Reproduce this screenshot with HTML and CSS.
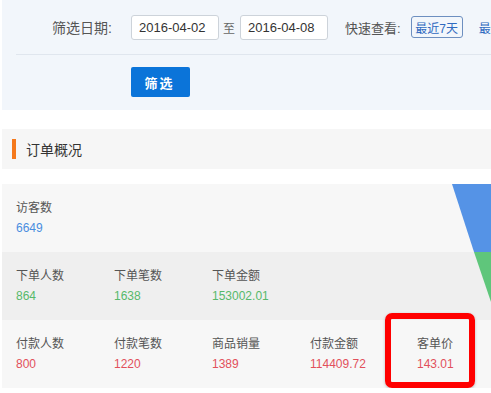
FILE: index.html
```html
<!DOCTYPE html>
<html lang="zh-CN">
<head>
  <meta charset="UTF-8" />
  <meta name="viewport" content="width=device-width, initial-scale=1.0"/>
  <title>订单概况</title>
  <link rel="stylesheet" href="styles.css">
</head>
<body>
  <div class="filter">
    <div class="filter-row">
      <span class="filter-label">筛选日期:</span>
      <input class="date-input" type="text" value="2016-04-02" />
      <span class="to">至</span>
      <input class="date-input" type="text" value="2016-04-08" />
      <span class="quick-label">快速查看:</span>
      <a class="quick-btn active">最近7天</a>
      <a class="quick-btn">最近30天</a>
    </div>
    <div class="filter-actions">
      <button class="filter-btn">筛选</button>
    </div>
  </div>

  <div class="section-title">
    <span class="bar"></span>
    <span>订单概况</span>
  </div>

  <div class="stats">
    <div class="stat-row light">
      <div class="cell"><div class="label">访客数</div><div class="value blue">6649</div></div>
    </div>
    <div class="stat-row dark">
      <div class="cell"><div class="label">下单人数</div><div class="value green">864</div></div>
      <div class="cell"><div class="label">下单笔数</div><div class="value green">1638</div></div>
      <div class="cell"><div class="label">下单金额</div><div class="value green">153002.01</div></div>
    </div>
    <div class="stat-row light">
      <div class="cell"><div class="label">付款人数</div><div class="value red">800</div></div>
      <div class="cell"><div class="label">付款笔数</div><div class="value red">1220</div></div>
      <div class="cell"><div class="label">商品销量</div><div class="value red">1389</div></div>
      <div class="cell"><div class="label">付款金额</div><div class="value red">114409.72</div></div>
      <div class="cell last"><div class="label">客单价</div><div class="value red">143.01</div></div>
    </div>

    <svg class="funnel" width="41" height="140" viewBox="0 0 41 140">
      <polygon points="0,0 41,0 41,68 22,68" fill="#5593e6"/>
      <polygon points="22,68 41,68 41,124" fill="#5fc67b"/>
    </svg>
    <div class="highlight"></div>
  </div>
</body>
</html>
```

FILE: styles.css
```css
* {
  box-sizing: border-box;
}

body {
  margin: 0;
  font-family: "Liberation Sans", "Noto Sans CJK SC", sans-serif;
  color: #555;
  background: #fff;
}

.filter {
  margin-left: 2px;
  height: 110px;
  background: #f2f6fb;
}

.filter-row {
  display: flex;
  align-items: center;
  height: 55px;
  margin-left: 14px;
  padding-left: 36px;
  border-bottom: 1px solid #e0e6ee;
  white-space: nowrap;
  overflow: hidden;
}

.filter-row > * {
  flex-shrink: 0;
}

.filter-label {
  width: 79px;
  font-size: 14px;
  color: #555;
}

.date-input {
  width: 88px;
  height: 25px;
  padding: 0 7px;
  border: 1px solid #cdd3da;
  border-radius: 3px;
  background: #fff;
  font-family: inherit;
  font-size: 13px;
  color: #333;
  outline: none;
}

.to {
  margin: 0 5px 0 4px;
  font-size: 12px;
  color: #666;
}

.quick-label {
  margin-left: 17px;
  margin-right: 10px;
  font-size: 13px;
  color: #555;
}

.quick-btn {
  display: flex;
  align-items: center;
  justify-content: center;
  height: 22px;
  padding: 0 5px;
  font-size: 12px;
  color: #2f6ac0;
  border: 1px solid transparent;
  border-radius: 3px;
  margin-right: 10px;
}

.quick-btn.active {
  border-color: #6d8fc0;
  width: 52px;
}

.filter-actions {
  padding: 12px 0 0 129px;
}

.filter-btn {
  width: 59px;
  height: 30px;
  border: none;
  border-radius: 2px;
  background: #0b74d9;
  color: #fff;
  font-family: inherit;
  font-size: 13px;
  font-weight: bold;
  letter-spacing: 2px;
  padding-left: 4px;
}

.section-title {
  display: flex;
  align-items: center;
  gap: 10px;
  margin: 19px 0 0 2px;
  height: 40px;
  padding-left: 10px;
  background: #f6f6f6;
  font-size: 14px;
  color: #333;
}

.section-title .bar {
  width: 4px;
  height: 20px;
  background: #f5791c;
}

.stats {
  position: relative;
  margin: 15px 0 0 2px;
  overflow: hidden;
}

.stat-row {
  display: flex;
  height: 68px;
  padding: 14px 0 0 14px;
  font-size: 12px;
  line-height: 20px;
}

.stat-row.light {
  background: #f7f7f7;
}

.stat-row.dark {
  background: #efefef;
}

.cell {
  flex-shrink: 0;
  width: 98px;
}

.cell.last {
  padding-left: 9px;
}

.label {
  color: #555;
}

.value.blue {
  color: #4a8de0;
}

.value.green {
  color: #56b96a;
}

.value.red {
  color: #e2505b;
}

.funnel {
  position: absolute;
  top: 0;
  left: 450px;
}

.highlight {
  position: absolute;
  top: 129px;
  left: 383px;
  width: 90px;
  height: 75px;
  border: 6px solid #ff0000;
  border-radius: 7px;
  box-shadow: 0 1px 3px rgba(0, 0, 0, 0.25);
}
```
